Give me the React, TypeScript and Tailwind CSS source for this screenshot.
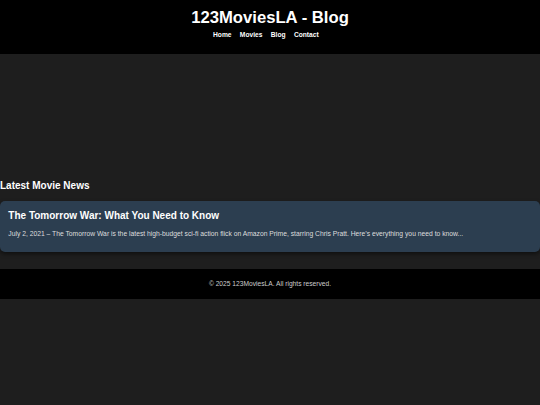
export default function App() {
  const links = ["Home", "Movies", "Blog", "Contact"];

  return (
    <div
      className="min-h-screen bg-[#1e1e1e] text-white"
      style={{ fontFamily: '"Liberation Sans", Arial, sans-serif' }}
    >
      <header className="h-[54px] bg-black pt-[10px] text-center">
        <h1 className="text-[16.67px] font-bold leading-none">123MoviesLA - Blog</h1>
        <nav className="mt-[5px] flex justify-center pl-0 text-[6.67px] font-bold leading-none">
          {links.map((l) => (
            <a key={l} href="#" className="mr-[8.33px] text-white no-underline">
              {l}
            </a>
          ))}
        </nav>
      </header>

      <main className="pt-[126.5px] pb-[17px]">
        <h2 className="mb-[10.2px] text-[10px] font-bold leading-none">Latest Movie News</h2>
        <article className="rounded-[5px] bg-[#2c3e50] px-[8.33px] pt-[10px] pb-[14.5px] shadow-[0_2px_4px_rgba(0,0,0,0.5)]">
          <h3 className="text-[10px] font-bold leading-none">
            The Tomorrow War: What You Need to Know
          </h3>
          <p className="mt-[10.4px] text-[6.75px] leading-none text-[#dddddd]">
            July 2, 2021 – The Tomorrow War is the latest high-budget sci-fi action flick on Amazon
            Prime, starring Chris Pratt. Here’s everything you need to know...
          </p>
        </article>
      </main>

      <footer className="flex h-[30px] items-center justify-center bg-black text-[6.67px] leading-none text-[#cccccc]">
        © 2025 123MoviesLA. All rights reserved.
      </footer>
    </div>
  );
}
